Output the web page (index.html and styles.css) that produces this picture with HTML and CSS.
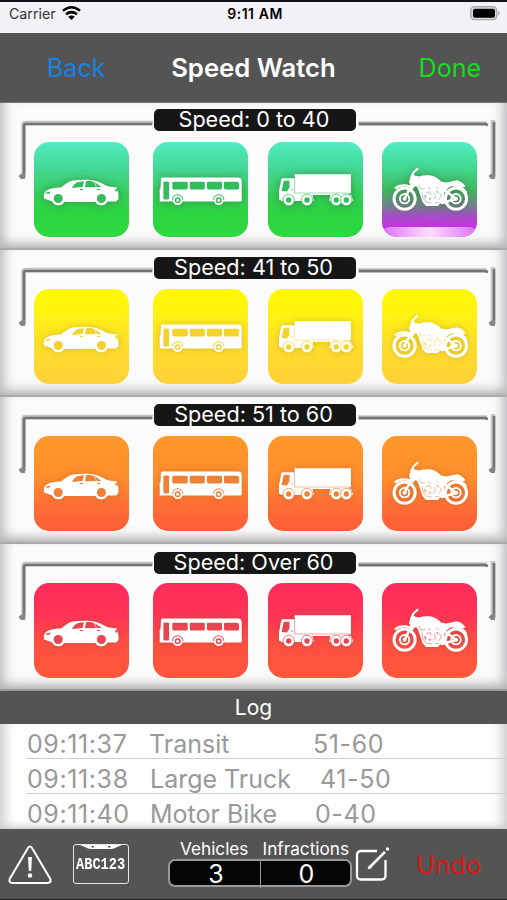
FILE: index.html
```html
<!DOCTYPE html>
<html lang="en">
<head>
<meta charset="utf-8">
<title>Speed Watch</title>
<link rel="stylesheet" href="styles.css">
</head>
<body>
<svg class="defs" aria-hidden="true">
  <defs>
    <symbol id="car" viewBox="0 0 95 95">
      <path fill="#fff" d="M10 56.500C9.500 53 10 50.500 12 49C15 46.500 21 45.700 27 45.500C31 42.500 34 39.600 39 38.600C47 37.400 56 37.500 62 39C67 40.300 71 43.500 75 44.500L83 45.500L82.500 47C84.500 49 84.500 53 84.500 57L82 59.500H73A6.500 6.500 0 0 1 61.500 60H30A6.500 6.500 0 0 1 18.500 59.500Z"/>
      <circle cx="24.200" cy="56.500" r="6.700" fill="#fff"/><circle cx="24.200" cy="56.500" r="4.500" fill="currentColor"/>
      <circle cx="67.400" cy="56.500" r="6.700" fill="#fff"/><circle cx="67.400" cy="56.500" r="4.500" fill="currentColor"/>
      <path fill="currentColor" d="M38 46C40 41.500 43 39.500 50 39.200L48.500 45ZM52 39.200C57 38.500 61 39.500 67.500 45L51 45.300ZM12 50.500L17 49.500L15 51.700H11.500ZM81 47.500L83.500 47V49.500H81.500ZM46 47H49V48H46ZM63 47H66V48H63Z"/>
      <path d="M60 39.500L62.500 45" stroke="#fff" stroke-width=".6"/>
    </symbol>
    <symbol id="bus" viewBox="0 0 95 95">
      <path fill="#fff" d="M8 36.500Q8.200 35.600 9.500 35.600H85Q88.500 35.600 88.700 39V58.500Q88.600 59.400 87.500 59.400H6.700V50Q6 47 7.500 46Z"/>
      <g fill="currentColor">
        <rect x="10.400" y="39.500" width="5.700" height="18" rx="1.300"/>
        <rect x="19.300" y="39.800" width="15.400" height="7.600" rx="1.300"/><rect x="36.800" y="39.800" width="15" height="7.600" rx="1.300"/><rect x="54" y="39.800" width="15" height="7.600" rx="1.300"/><path d="M72.300 39.800H83.700Q86 39.800 86.100 42V46.100Q86 47.400 84.800 47.400H72.300Q71 47.400 71 46V41Q71 39.800 72.300 39.800Z"/>
        <path d="M19 58A5.700 5.700 0 0 1 30.400 58M60 58A5.700 5.700 0 0 1 71.400 58"/>
      </g>
      <g fill="#fff"><circle cx="24.700" cy="58.200" r="4.900"/><circle cx="65.700" cy="58.200" r="4.900"/></g>
      <g fill="#fff" stroke="currentColor" stroke-width="1.500"><circle cx="24.700" cy="58.200" r="2.300"/><circle cx="65.700" cy="58.200" r="2.300"/></g>
    </symbol>
    <symbol id="truck" viewBox="0 0 95 95">
      <path fill="#fff" d="M26.500 32.200H83V51.200H81V52.700H83L85.500 59H61L62.500 53H44.500L46 59H14L11 57.500V49.500L13.200 37.500Q13.500 36.300 15 36.300H26.500Z"/>
      <path d="M26.500 34V51H81" fill="none" stroke="currentColor" stroke-width=".5"/>
      <path fill="currentColor" d="M15.600 39.500Q15.800 38.700 16.500 38.700H21.500V45.500L19 49.500L13.600 49ZM23 47.500H25V48.300H23Z"/>
      <g fill="#fff" stroke="currentColor" stroke-width=".7"><circle cx="20.700" cy="58" r="5.700"/><circle cx="39" cy="58" r="5.700"/><circle cx="68.300" cy="58" r="5.700"/><circle cx="78.300" cy="58" r="5.700"/></g>
      <g fill="currentColor"><circle cx="20.700" cy="58" r="2.700"/><circle cx="39" cy="58" r="2.700"/><circle cx="68.300" cy="58" r="2.700"/><circle cx="78.300" cy="58" r="2.700"/></g>
    </symbol>
    <linearGradient id="shine" gradientUnits="userSpaceOnUse" x1="0" y1="26" x2="0" y2="70"><stop offset=".45" stop-color="#fff"/><stop offset="1" stop-color="#f3b4fb"/></linearGradient>
    <symbol id="moto" viewBox="0 0 95 95">
      <g class="wheels" fill="none">
        <circle cx="22.600" cy="56.700" r="10.600" stroke-width="3"/><circle cx="74" cy="56.700" r="10.600" stroke-width="3"/>
        <circle cx="22.600" cy="56.700" r="4.700" stroke-width="1.900"/><circle cx="74" cy="56.700" r="4.700" stroke-width="1.900"/>
        <path stroke-width="2.600" stroke-linecap="round" d="M23.500 55L32 38M61 47L73 56M60 61L74 57"/>
        <path stroke-width="2" stroke-linecap="round" d="M35.500 26.700L31.500 30.500L29 37M60 46C68 41 80 43.500 84 50"/>
        <path stroke-width="2.400" d="M13 46.500C18 42 27 42.500 31 47"/>
      </g>
      <path fill="#fff" d="M27 40.500L28.500 34.500L30.500 30L32.500 33.500L37 34.500Q41 32.900 47.500 33.300Q55 34.500 59 39.500L64 40.500L75 38.200Q80 39 83.500 44.300L81 45.500L69 43.800L62.500 49.500L62 60.500L58 61.500L56 64H44L40.500 60L36 46.500L34 44L31 46Z"/>
      <circle cx="22.600" cy="56.700" r="2" fill="#fff"/><circle cx="74" cy="56.700" r="2" fill="#fff"/>
      <g fill="none" stroke="currentColor" stroke-width=".8" opacity=".65"><path d="M37 43L38.500 47L43 46.500M40 50L41 56L44 60L50 61M46 45.500L49 47M54 44.500L56.500 47M44 51L48 49.500L49 53M51 57L54 55L52 51M57 51L59.500 53L57 58M53 60.500H57"/></g>
      <path fill="currentColor" opacity=".7" d="M42 52.500L44.500 54.500L43 57.500ZM54.500 48.500L56.500 49.500L55 52ZM46.500 56L49 55.500L48 59Z"/>
    </symbol>
    <symbol id="bracket" viewBox="0 0 507 80">
      <g fill="none" stroke="#c4c4c4" stroke-width="4.500"><path d="M23.500 74V22Q23.500 20 26 20H153M358 20.500H487M493 17V74"/></g>
      <g fill="none" stroke="#737373" stroke-width="2.600"><path d="M24 74V23Q24 21 26 21H152M359 21H485L488 22M494 19V74"/></g>
      <path fill="#858585" d="M18.500 73Q21 69.500 25 70V76L21 76ZM488.500 73Q491 69.500 495 70V76L491 76Z"/>
    </symbol>
  </defs>
</svg>
<main class="app">
  <div class="status">
    <div class="carrier"><span>Carrier</span>
      <svg width="19" height="14" viewBox="0 0 19 14"><path d="M1 4.800Q9.500-2.200 18 4.800M4 8.300Q9.500 4 15 8.300" fill="none" stroke="#000" stroke-width="2.500"/><path d="M6.200 10.700Q9.500 8.200 12.800 10.700L9.500 14Z"/></svg>
    </div>
    <span class="clock">9:11 AM</span>
    <svg class="battery" width="31" height="15" viewBox="0 0 31 15"><rect x=".8" y=".8" width="26" height="12.800" rx="3.700" fill="#ddd" stroke="#aaa" stroke-width="1.400"/><rect x="3" y="2.700" width="22" height="9" rx="2"/><path d="M28.300 4.500Q31 7.200 28.300 10Z" fill="#aaa"/></svg>
  </div>
  <header class="nav"><span class="back">Back</span><h1 class="title">Speed Watch</h1><span class="done">Done</span></header>

  <section class="band green">
    <svg class="bracket"><use href="#bracket"/></svg>
    <div class="label"><span>Speed: 0 to 40</span></div>
    <div class="tiles"><div class="tile"><svg><use href="#car"/></svg></div><div class="tile"><svg><use href="#bus"/></svg></div><div class="tile"><svg><use href="#truck"/></svg></div><div class="tile pressed"><svg><use href="#moto"/></svg></div></div>
  </section>
  <section class="band yellow">
    <svg class="bracket"><use href="#bracket"/></svg>
    <div class="label"><span>Speed: 41 to 50</span></div>
    <div class="tiles"><div class="tile"><svg><use href="#car"/></svg></div><div class="tile"><svg><use href="#bus"/></svg></div><div class="tile"><svg><use href="#truck"/></svg></div><div class="tile"><svg><use href="#moto"/></svg></div></div>
  </section>
  <section class="band orange">
    <svg class="bracket"><use href="#bracket"/></svg>
    <div class="label"><span>Speed: 51 to 60</span></div>
    <div class="tiles"><div class="tile"><svg><use href="#car"/></svg></div><div class="tile"><svg><use href="#bus"/></svg></div><div class="tile"><svg><use href="#truck"/></svg></div><div class="tile"><svg><use href="#moto"/></svg></div></div>
  </section>
  <section class="band red">
    <svg class="bracket"><use href="#bracket"/></svg>
    <div class="label"><span>Speed: Over 60</span></div>
    <div class="tiles"><div class="tile"><svg><use href="#car"/></svg></div><div class="tile"><svg><use href="#bus"/></svg></div><div class="tile"><svg><use href="#truck"/></svg></div><div class="tile"><svg><use href="#moto"/></svg></div></div>
  </section>

  <h2 class="log-title">Log</h2>
  <div class="log">
    <div class="row transit"><span class="num">09:11:37</span><span>Transit</span><span class="range">51-60</span></div>
    <div class="row truck"><span class="num">09:11:38</span><span>Large Truck</span><span class="range">41-50</span></div>
    <div class="row bike"><span class="num">09:11:40</span><span>Motor Bike</span><span class="range">0-40</span></div>
  </div>

  <footer class="toolbar">
    <svg class="warn" width="44" height="40" viewBox="0 0 44 40"><path d="M19.800 3.200Q22 0 24.200 3.200L42.300 34Q43.500 37.700 39.500 38H4.500Q.5 37.700 1.700 34Z" fill="none" stroke="#fff" stroke-width="2"/><path d="M20 12H24L23.200 26H20.800Z" fill="#fff"/><circle cx="22" cy="30.500" r="2.200" fill="#fff"/></svg>
    <div class="plate"><svg width="42" height="5" viewBox="0 0 42 5"><path d="M0 0H42L37 2Q34 4 31 4H11Q8 4 5 2Z" fill="#fff"/><path d="M11.500 1H14V2.500H11.500ZM28 1H30.500V2.500H28Z" fill="#555"/></svg><span>ABC123</span></div>
    <div class="counts">
      <div class="heads"><span>Vehicles</span><span>Infractions</span></div>
      <div class="values"><span>3</span><span>0</span></div>
    </div>
    <svg class="edit" width="35" height="35" viewBox="0 0 35 35"><path d="M22 4H6Q2 4 2 8V28.500Q2 32.500 6 32.500H26.500Q30.500 32.500 30.500 28.500V13" fill="none" stroke="#fff" stroke-width="2.300"/><path d="M14 21L30 4.800" stroke="#fff" stroke-width="2.600"/><path d="M12.500 22.500L14 18.500L17 21Z" fill="#fff"/><circle cx="32.500" cy="2" r="1.700" fill="#fff"/></svg>
    <span class="undo">Undo</span>
  </footer>
</main>
</body>
</html>
```
FILE: styles.css
```css
* { box-sizing: border-box; }
body { margin: 0; font-family: Inter, "Liberation Sans", sans-serif; }
.defs { position: absolute; width: 0; height: 0; }
.app { width: 507px; height: 900px; overflow: hidden; display: flex; flex-direction: column; background: #fbfbfc; }
.app span, .app h1, .app h2 { white-space: nowrap; }

.status { height: 33px; flex: none; background: #f2f1f6; border-top: 2px solid #151317; display: grid; grid-template-columns: 1fr auto 1fr; align-items: start; padding: 4px 6px 0 9px; font-size: 14px; line-height: 16px; }
.carrier { display: flex; gap: 6px; color: #333; font-size: 14.200px; }
.clock { font-weight: 600; letter-spacing: .55px; }
.battery { justify-self: end; }

.nav { height: 70px; flex: none; background: #545455; display: grid; grid-template-columns: 124px 1fr 124px; align-items: center; line-height: 34px; border-bottom: 1px solid #777; }
.nav > * { padding-top: 1px; }
.back { color: #1682e6; font-size: 25px; padding-left: 47px; }
.title { margin: 0; color: #fff; font-size: 25.700px; font-weight: 600; text-align: center; }
.done { color: #13df1b; font-size: 25px; justify-self: end; padding-right: 26px; }

.band { position: relative; height: 147px; flex: none; padding-top: 6px; display: flex; flex-direction: column; background: #fbfbfc; box-shadow: inset 13px 0 12px -9px #b9b9bd, inset -13px 0 12px -9px #b9b9bd, inset 0 -13px 11px -9px #aaa; border-bottom: 2px solid #aaa; }
.bracket { position: absolute; left: 0; top: 0; width: 507px; height: 80px; }
.label { position: relative; width: 202px; height: 22px; flex: none; margin: 0 0 11px 154px; border-radius: 5px; background: #161617; color: #fff; text-align: center; padding-right: 3px; font-size: 21.600px; line-height: 21px; }
.yellow .label, .orange .label { margin-top: 1px; margin-bottom: 10px; }
.red .label { margin-top: 2px; margin-bottom: 9px; }
.green .label { padding-right: 2px; }
.tiles { position: relative; display: grid; grid-template-columns: 119px 115px 114px 95px; padding-left: 34px; }
.tile { width: 95px; height: 95px; border-radius: 15px; }
.tile svg { display: block; width: 95px; height: 95px; filter: drop-shadow(0 0 3px rgba(80, 80, 50, .25)); }
.green .tile svg { filter: drop-shadow(0 0 4px rgba(60, 90, 50, .5)); }
.green .tile { background: linear-gradient(#50edc3, #44d895 28%, #31cf55 58%, #2bd541 75%, #2dd83f); color: #31bd5c; }
.yellow .tile { background: linear-gradient(#fff900, #fff313 25%, #ffdf28 55%, #ffd13a); color: #f3d12f; }
.orange .tile { background: linear-gradient(#ff982a, #ff8d2c 45%, #ff7133 70%, #ff5d39); color: #ed8137; }
.red .tile { background: linear-gradient(#ff2b5c, #ff3455 35%, #ff5040 65%, #ff573b); color: #e74550; }
.wheels { stroke: #fff; }
.green .tile.pressed { display: flex; flex-direction: column; justify-content: flex-end; overflow: hidden; background: linear-gradient(#50edc3, #42d78e 28%, #3eba60 50%, #6d888b 66%, #a94bc7 78%, #bf35dc 89%); color: #76a58e; --glow: #f9dcfd; }
.pressed svg { flex: none; margin-bottom: -10px; }
.pressed::after { content: ""; position: relative; flex: none; height: 10px; border-radius: 9px 9px 0 0 / 4px 4px 0 0; background: linear-gradient(90deg, #dc70f6, #ffdcfd 50%, #dc70f6); }
.red { border-bottom-color: #999; }

.log-title { margin: 0; height: 33px; flex: none; background: #535354; color: #fff; font-size: 21px; font-weight: 400; line-height: 33px; text-align: center; }
.log { height: 105px; flex: none; padding-left: 26px; background: #fefefe; box-shadow: inset 13px 0 12px -8px #ccc, inset -13px 0 12px -8px #ccc, inset 0 -7px 8px -6px #bbb; color: #999; font-size: 25px; }
.row { display: grid; grid-template-columns: 122px 164px 1fr; height: 35px; line-height: 40px; padding-left: 1px; border-bottom: 1px solid #d0d0d0; }
.row.truck { grid-template-columns: 123px 170px 1fr; }
.row.bike { grid-template-columns: 123px 165px 1fr; }
.num { letter-spacing: .6px; }
.range { letter-spacing: .6px; }

.toolbar { height: 71px; flex: none; background: #545455; border-bottom: 1px solid #222; display: flex; align-items: flex-start; color: #fff; }
.warn { margin: 16px 0 0 8px; }
.plate { width: 56px; height: 40px; margin: 15px 0 0 21px; border: 1.500px solid #e5e5e5; border-radius: 3px; display: flex; flex-direction: column; align-items: center; font: 700 17px/29px "Liberation Mono", monospace; }
.plate svg { flex: none; }
.plate span { transform: scaleX(.8); }
.counts { width: 184px; margin: 9px 0 0 39px; }
.heads { display: flex; justify-content: space-between; padding: 0 3px 0 12px; font-size: 17.200px; line-height: 21px; }
.values { height: 28px; border: 2px solid #999; border-radius: 7px; background: #050505; display: grid; grid-template-columns: 1fr 1fr; text-align: center; font-size: 25px; line-height: 27px; }
.values span { padding-left: 2px; }
.values span + span { border-left: 1.500px solid #999; }
.edit { margin: 18px 0 0 3px; }
.undo { margin: 19px 0 0 26px; color: #df1717; font-size: 25.700px; line-height: 34px; }
```
